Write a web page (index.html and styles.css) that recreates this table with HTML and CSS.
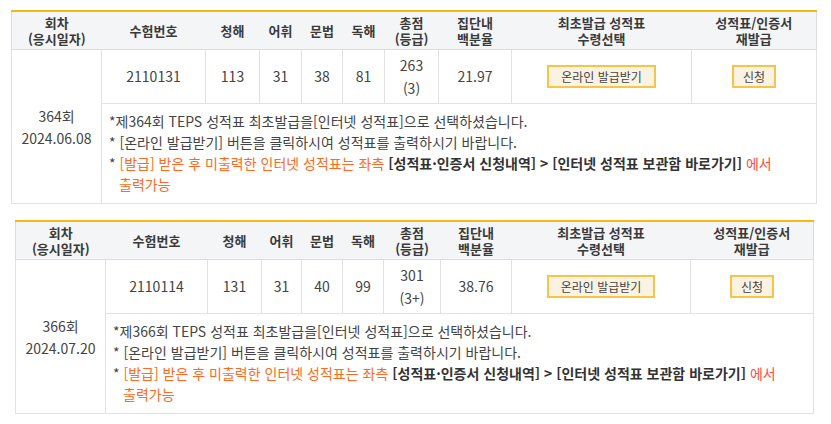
FILE: index.html
```html
<!DOCTYPE html>
<html lang="ko">
<head>
<meta charset="utf-8">
<link rel="stylesheet" href="styles.css">
</head>
<body>
<div class="page">
  <table class="score score-a">
    <colgroup>
      <col style="width:90px"><col style="width:104px"><col style="width:54px"><col style="width:42px"><col style="width:41px"><col style="width:42px"><col style="width:54px"><col style="width:73px"><col style="width:180px"><col>
    </colgroup>
    <thead>
      <tr>
        <th>회차<br>(응시일자)</th>
        <th>수험번호</th>
        <th>청해</th>
        <th>어휘</th>
        <th>문법</th>
        <th>독해</th>
        <th>총점<br>(등급)</th>
        <th>집단내<br>백분율</th>
        <th>최초발급 성적표<br>수령선택</th>
        <th>성적표/인증서<br>재발급</th>
      </tr>
    </thead>
    <tbody>
      <tr class="data">
        <td rowspan="2" class="round">364회<br>2024.06.08</td>
        <td>2110131</td>
        <td>113</td>
        <td>31</td>
        <td>38</td>
        <td>81</td>
        <td class="total">263<br>(3)</td>
        <td>21.97</td>
        <td><span class="btn btn-wide">온라인 발급받기</span></td>
        <td><span class="btn">신청</span></td>
      </tr>
      <tr class="notes">
        <td colspan="9">
          <p>*제364회 TEPS 성적표 최초발급을[인터넷 성적표]으로 선택하셨습니다.</p>
          <p>* [온라인 발급받기] 버튼을 클릭하시여 성적표를 출력하시기 바랍니다.</p>
          <p class="warn"><span class="star">*</span> [발급] 받은 후 미출력한 인터넷 성적표는 좌측 <b>[성적표·인증서 신청내역] &gt; [인터넷 성적표 보관함 바로가기]</b> <span class="red">에서</span><br><span class="indent">출력가능</span></p>
        </td>
      </tr>
    </tbody>
  </table>

  <table class="score score-b">
    <colgroup>
      <col style="width:90px"><col style="width:102px"><col style="width:54px"><col style="width:40px"><col style="width:41px"><col style="width:41px"><col style="width:57px"><col style="width:71px"><col style="width:179px"><col>
    </colgroup>
    <thead>
      <tr>
        <th>회차<br>(응시일자)</th>
        <th>수험번호</th>
        <th>청해</th>
        <th>어휘</th>
        <th>문법</th>
        <th>독해</th>
        <th>총점<br>(등급)</th>
        <th>집단내<br>백분율</th>
        <th>최초발급 성적표<br>수령선택</th>
        <th>성적표/인증서<br>재발급</th>
      </tr>
    </thead>
    <tbody>
      <tr class="data">
        <td rowspan="2" class="round">366회<br>2024.07.20</td>
        <td>2110114</td>
        <td>131</td>
        <td>31</td>
        <td>40</td>
        <td>99</td>
        <td class="total">301<br>(3+)</td>
        <td>38.76</td>
        <td><span class="btn btn-wide">온라인 발급받기</span></td>
        <td><span class="btn">신청</span></td>
      </tr>
      <tr class="notes">
        <td colspan="9">
          <p>*제366회 TEPS 성적표 최초발급을[인터넷 성적표]으로 선택하셨습니다.</p>
          <p>* [온라인 발급받기] 버튼을 클릭하시여 성적표를 출력하시기 바랍니다.</p>
          <p class="warn"><span class="star">*</span> [발급] 받은 후 미출력한 인터넷 성적표는 좌측 <b>[성적표·인증서 신청내역] &gt; [인터넷 성적표 보관함 바로가기]</b> <span class="red">에서</span><br><span class="indent">출력가능</span></p>
        </td>
      </tr>
    </tbody>
  </table>
</div>
</body>
</html>
```

FILE: styles.css
```css
html, body {
  margin: 0;
  padding: 0;
  background: #ffffff;
}

body {
  font-family: "Noto Sans CJK KR", "Noto Sans", sans-serif;
  font-size: 14px;
  color: #444;
}

.page {
  padding-top: 10px;
}

.score {
  border-collapse: collapse;
  table-layout: fixed;
  border-top: 2px solid #f5b90f;
  border-left: 1px solid #dcdcdc;
  border-right: 1px solid #dcdcdc;
  border-bottom: 1px solid #dcdcdc;
}

.score-a {
  width: 806px;
  margin-left: 11px;
}

.score-b {
  width: 799px;
  margin-left: 15px;
  margin-top: 16px;
}

.score th {
  background: #f4f5f7;
  color: #3a3a3a;
  font-weight: bold;
  font-size: 13px;
  line-height: 16px;
  height: 37px;
  padding: 0;
  text-align: center;
  vertical-align: middle;
  border-bottom: 1px solid #dcdcdc;
}

.score td {
  text-align: center;
  vertical-align: middle;
  padding: 0;
  border: 1px solid #e2e2e2;
  line-height: 21px;
  color: #444;
}

.score tr.data td {
  height: 53px;
}

.score td.round {
  line-height: 22px;
}

.score td.total {
  line-height: 23px;
}

.btn {
  display: inline-block;
  background: #faf3e3;
  border: 2px solid #f7c444;
  color: #444;
  height: 19px;
  line-height: 19px;
  padding: 0 9px;
  font-size: 12px;
}

.btn-wide {
  padding: 0 12px;
}

.score tr.notes td {
  text-align: left;
  padding: 7px 6px 8px 7px;
}

.notes p {
  margin: 0;
  line-height: 21px;
}

.warn {
  color: #ff6a22;
}

.warn .star {
  color: #444;
}

.warn b {
  color: #333;
}

.warn .red {
  color: #ff4d3a;
}

.indent {
  padding-left: 10px;
}
```
